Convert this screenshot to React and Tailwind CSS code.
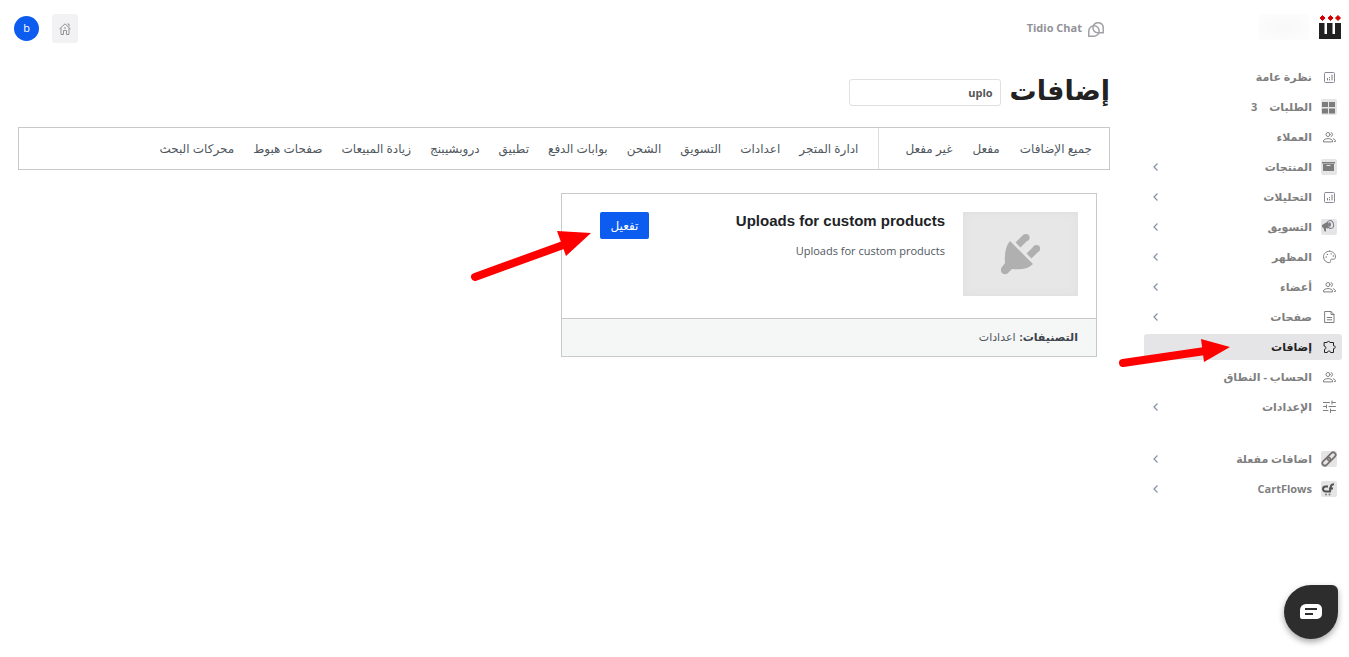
import { useState } from "react";
import clsx from "clsx";

// --- ICONS ---
const OutlineIcon = ({ size = 14, children }) => (
  <svg
    width={size}
    height={size}
    viewBox="0 0 14 14"
    fill="none"
    stroke="currentColor"
    strokeWidth="1"
    strokeLinecap="round"
    strokeLinejoin="round"
    aria-hidden="true"
  >
    {children}
  </svg>
);

const TileIcon = ({ children }) => (
  <svg width="16" height="16" viewBox="0 0 16 16" fill="#7d7c7c" aria-hidden="true">
    <rect width="16" height="16" rx="2" fill="#e5e5e7" />
    {children}
  </svg>
);

const ChartIcon = () => (
  <OutlineIcon>
    <rect x="2.5" y="2.5" width="10" height="10" rx="1" stroke="#8d8b9b" />
    <path d="M5.5 10V8.500M7.500 10v-.5M7.500 7.500v.3M10 10V5" />
  </OutlineIcon>
);

const UsersIcon = () => (
  <OutlineIcon>
    <circle cx="6" cy="4.500" r="2" />
    <path d="M9.200 2.600a2 2 0 0 1 0 3.800M1.500 11.500V11c0-1.400 2-2.400 4.500-2.400s4.500 1 4.500 2.400v.5zM11.300 8.800c1.300.4 2.200 1.200 2.200 2.200v.5h-1" />
  </OutlineIcon>
);

const PaletteIcon = () => (
  <OutlineIcon>
    <path d="M7.500 1.200C4 1.200 1.500 3.600 1.500 6.800c0 3.300 2.700 5.900 5.800 5.900 1.200 0 1.500-.8 1.300-1.500-.4-1.200.1-2 1.300-2h1.600c1.200 0 2-.9 2-2.200 0-3.300-2.700-5.800-6-5.800z" />
    <path d="M4.100 7h.1M5.400 4.400h.1M9.100 3.900h.1M11.300 6h.1" strokeWidth="1.400" />
  </OutlineIcon>
);

const PageIcon = () => (
  <OutlineIcon>
    <path d="M3 1.500h6l3 3v8H3zM9 1.500v3h3M5.300 7.500h4.400M5.300 9.800h4.400" />
  </OutlineIcon>
);

// piece with knobs on top and right, notches on the left and bottom
const PuzzleIcon = () => (
  <OutlineIcon>
    <path d="M2.500 2.500h2.600c-.3-1.500 3.100-1.500 2.800 0h3.600v3.200c2.200-.5 2.200 3.400 0 3v3.800H8.600c.2-1.900-3.500-1.900-3.300 0H2.500V9.300c1.900.2 1.900-3.400 0-3.200z" />
  </OutlineIcon>
);

const SlidersIcon = () => (
  <OutlineIcon>
    <path d="M1.500 2.500h6M10 2.500h3.500M10 1v3M1.500 6.500h2.500M7 6.500h6.500M4.500 5v3M1.500 10.500h4.500M8.500 10.500h5M8.500 9v3.500" />
  </OutlineIcon>
);

const GridTile = () => (
  <TileIcon>
    <path d="M1 3h6v5H1zM8 3h6v5H8zM1 9.500h6v5H1zM8 9.500h6v5H8z" />
  </TileIcon>
);

const ArchiveTile = () => (
  <TileIcon>
    <path d="M1 3h13v1.500H1z" />
    <path fillRule="evenodd" d="M2 5h11v7H2zM5.500 6v1h4V6z" />
  </TileIcon>
);

const MegaphoneTile = () => (
  <TileIcon>
    <path d="M1 6 7 2.500v7L5 9v3.500H3.500L2.500 9 1 8z" />
    <ellipse cx="9.500" cy="5.500" rx="3" ry="4" fill="none" stroke="#7d7c8c" strokeWidth="1" transform="rotate(-15 9.500 5.500)" />
    <ellipse cx="8.500" cy="5.500" rx="1.500" ry="2.200" />
  </TileIcon>
);

const LinkTile = () => (
  <TileIcon>
    <g fill="none" stroke="#76716e" strokeWidth="1.800">
      <rect x="5.700" y="3" width="9.600" height="5" rx="2.500" transform="rotate(-45 10.500 5.500)" />
      <rect x=".7" y="8" width="9.600" height="5" rx="2.500" transform="rotate(-45 5.500 10.500)" />
    </g>
  </TileIcon>
);

const CartFlowsTile = () => (
  <TileIcon>
    <g fill="none" stroke="#55514e" strokeWidth="2">
      <path d="M7 5.500H4.500a2.500 2.500 0 0 0 0 5H9l1-5.500q.4-1.800 3-1.800M8 7.500h4" />
    </g>
    <circle cx="5" cy="13.500" r="1" />
    <circle cx="8.500" cy="13.500" r="1" />
  </TileIcon>
);

const Logo = () => (
  <svg width="24" height="25" viewBox="0 0 24 25" aria-hidden="true">
    <path d="M1 9h5.500v11h2.500V9h5.500v11h2.500V9H23v16H1z" fill="#222" />
    <path
      d="m4.500 1.500 2.500 2.500-2.500 2.500L2 4zm8 0L15 4l-2.500 2.500L10 4zm7.500 0L22.500 4 20 6.500 17.500 4z"
      fill="#d40000"
      stroke="#d40000"
      strokeLinejoin="round"
    />
  </svg>
);

const TidioIcon = () => (
  <svg width="16" height="16" viewBox="0 0 16 16" fill="none" stroke="#a1a1a6" strokeWidth="1.500" aria-hidden="true">
    <path d="M5 5.800A5.200 5.200 0 0 1 15.200 6v5.800H10A5 5 0 0 1 5 5.800z" />
    <path d="M.8 15.200V9.800a5.200 5.200 0 1 1 5.400 5.400z" />
  </svg>
);

const HomeIcon = () => (
  <svg width="12" height="12" viewBox="0 0 12 12" fill="none" stroke="#929292" strokeWidth="1" aria-hidden="true">
    <path d="M.5 6 6 .8 11.500 6M2 5v6.500h2.500V7.500h3v4H10V5M8.500 1H10v2.500" />
    <path d="M5 5h2" />
  </svg>
);

const PlugIcon = () => (
  <svg width="40" height="42" viewBox="0 0 40 42" fill="#b0b0b0" aria-hidden="true">
    <path d="M9 8 32 31c-5 5-13 6-21 5l-4 4a4 4 0 0 1-6-6l3-4C3.500 22 4 14 9 8z" />
    <path d="m17 12 8-8M28 23l8-8" stroke="#b0b0b0" strokeWidth="7" />
    <circle cx="25" cy="4.500" r="3.600" />
    <circle cx="35.500" cy="15.500" r="3.600" />
  </svg>
);

const Chevron = () => (
  <svg width="5" height="8" viewBox="0 0 5 8" fill="none" stroke="#8592a6" strokeWidth="1.200" aria-hidden="true">
    <path d="M4.500.5 1 4l3.500 3.500" />
  </svg>
);

// --- DATA ---
const menu = [
  { label: "نظرة عامة", icon: ChartIcon },
  { label: "الطلبات", icon: GridTile, count: 3 },
  { label: "العملاء", icon: UsersIcon },
  { label: "المنتجات", icon: ArchiveTile, sub: true },
  { label: "التحليلات", icon: ChartIcon, sub: true },
  { label: "التسويق", icon: MegaphoneTile, sub: true },
  { label: "المظهر", icon: PaletteIcon, sub: true },
  { label: "أعضاء", icon: UsersIcon, sub: true },
  { label: "صفحات", icon: PageIcon, sub: true },
  { label: "إضافات", icon: PuzzleIcon, active: true },
  { label: "الحساب - النطاق", icon: UsersIcon },
  { label: "الإعدادات", icon: SlidersIcon, sub: true },
];

const extraMenu = [
  { label: "اضافات مفعلة", icon: LinkTile, sub: true },
  { label: "CartFlows", icon: CartFlowsTile, sub: true },
];

const statusTabs = ["جميع الإضافات", "مفعل", "غير مفعل"];

const categoryTabs = [
  "ادارة المتجر",
  "اعدادات",
  "التسويق",
  "الشحن",
  "بوابات الدفع",
  "تطبيق",
  "دروبشيبنج",
  "زيادة المبيعات",
  "صفحات هبوط",
  "محركات البحث",
];

const MenuItem = ({ item }) => {
  const Icon = item.icon;
  return (
    <li className="relative">
      <a
        href="#"
        className={clsx(
          "flex h-[26px] items-center rounded-[3px] pr-[5px] pl-[9px] text-[11px] font-bold",
          item.active ? "bg-[#e5e5e7] text-[#222]" : "text-[#7f7f7f]"
        )}
      >
        <span className="flex w-4 shrink-0 justify-center">
          <Icon />
        </span>
        <span className="mr-[9px] whitespace-nowrap">{item.label}</span>
        {item.count && <span className="mr-3">{item.count}</span>}
        {item.sub && (
          <span className="mr-auto">
            <Chevron />
          </span>
        )}
      </a>
      {item.active && (
        <svg
          className="pointer-events-none absolute top-[2px] -left-[26px] z-10"
          width="113"
          height="32"
          viewBox="0 0 113 32"
          aria-hidden="true"
        >
          <path d="M5 27 87 15" stroke="red" strokeWidth="8" strokeLinecap="round" />
          <path d="M83 3 112 11 86 26z" fill="red" />
        </svg>
      )}
    </li>
  );
};

const Tab = ({ label }) => (
  <a href="#" className="whitespace-nowrap">
    {label}
  </a>
);

export default function App() {
  const [query, setQuery] = useState("uplo");

  return (
    <div
      dir="rtl"
      lang="ar"
      className="flex min-h-screen bg-white font-['Open_Sans','DejaVu_Sans',sans-serif] text-[11px] text-[#50575e]"
    >
      <aside className="w-[212px] shrink-0 px-[7px]">
        <div className="flex h-16 items-start gap-[9px] pt-[14px]">
          <Logo />
          <div className="h-[26px] w-[50px] bg-radial from-[#f8f8f8] to-[#fdfdfd]" />
        </div>
        <nav>
          <ul className="flex flex-col gap-1">
            {menu.map((item) => (
              <MenuItem key={item.label} item={item} />
            ))}
          </ul>
          <ul className="mt-[26px] flex flex-col gap-1">
            {extraMenu.map((item) => (
              <MenuItem key={item.label} item={item} />
            ))}
          </ul>
        </nav>
      </aside>

      <div className="min-w-0 flex-1">
        <header className="flex h-[57px] items-center pr-[33px] pl-[14px]">
          <a href="#" className="flex items-center gap-[6px] font-bold text-[#929297]">
            <TidioIcon />
            Tidio Chat
          </a>
          <div className="mr-auto flex items-center gap-[13px]">
            <button
              type="button"
              aria-label="الرئيسية"
              className="flex h-[29px] w-[26px] items-center justify-center rounded-[3px] bg-[#f2f2f4]"
            >
              <HomeIcon />
            </button>
            <button
              type="button"
              className="flex size-[25px] items-center justify-center rounded-full bg-[#0c5cef] text-white"
            >
              b
            </button>
          </div>
        </header>

        <main className="pr-[27px] pl-[18px]">
          <div className="flex h-[70px] items-center gap-[9px]">
            <h1 className="pb-1 text-[27px] leading-8 font-bold text-[#222]">إضافات</h1>
            <input
              type="text"
              aria-label="بحث"
              value={query}
              onChange={(e) => setQuery(e.target.value)}
              className="h-[27px] w-[152px] rounded-[3px] border border-[#e0e0e2] px-[7px] font-bold text-[#555] outline-none"
            />
          </div>

          <nav className="flex h-[43px] border border-[#c8c9ca] text-[12px]">
            <div className="flex items-center gap-5 border-l border-[#dcdcde] pr-[17px] pl-[26px]">
              {statusTabs.map((label) => (
                <Tab key={label} label={label} />
              ))}
            </div>
            <div className="flex items-center gap-[19px] pr-5">
              {categoryTabs.map((label) => (
                <Tab key={label} label={label} />
              ))}
            </div>
          </nav>

          <article className="relative mt-[23px] mr-[13px] w-[calc(50%-10px)] border border-[#c8c9ca]">
            <div className="flex h-[124px] items-start p-[18px]">
              <div className="flex h-[84px] w-[115px] shrink-0 items-center justify-center bg-[#e7e7e7] shadow-[inset_0_0_8px_#dedede]">
                <PlugIcon />
              </div>
              <div className="mr-[18px]">
                <h2 className="font-['Liberation_Sans',Arial,sans-serif] text-[15px] leading-[18px] font-bold text-[#1d2327]">
                  Uploads for custom products
                </h2>
                <p className="mt-[13px] leading-4">Uploads for custom products</p>
              </div>
              <button
                type="button"
                className="mr-auto ml-5 h-[27px] w-[49px] rounded-[2px] bg-[#0c5cef] text-[12px] text-white"
              >
                تفعيل
              </button>
            </div>
            <footer className="flex h-[38px] items-center gap-1 border-t border-[#c8c9ca] bg-[#f5f7f7] px-[18px]">
              <strong className="text-[#3c434a]">التصنيفات:</strong>
              <span>اعدادات</span>
            </footer>
            <svg
              className="pointer-events-none absolute top-8 -left-[94px]"
              width="124"
              height="60"
              viewBox="0 0 124 60"
              aria-hidden="true"
            >
              <path d="M7 51 98 18" stroke="red" strokeWidth="8" strokeLinecap="round" />
              <path d="M89 5 123 7 98 30z" fill="red" />
            </svg>
          </article>
        </main>
      </div>

      <button
        type="button"
        aria-label="Chat"
        className="fixed right-[11px] bottom-[18px] flex size-[54px] items-center justify-center rounded-[27px] rounded-tr-[6px] bg-[#2d2d2d] shadow-[0_3px_6px_rgba(0,0,0,0.35)]"
      >
        <svg width="22" height="16" viewBox="0 0 22 16" aria-hidden="true">
          <path d="M6 0h11a5 5 0 0 1 5 5v5a5 5 0 0 1-5 5H2a2 2 0 0 1-2-2V6a6 6 0 0 1 6-6z" fill="#fff" />
          <path d="M5 5h12M5 10h8" stroke="#2d2d2d" strokeWidth="2" />
        </svg>
      </button>
    </div>
  );
}
